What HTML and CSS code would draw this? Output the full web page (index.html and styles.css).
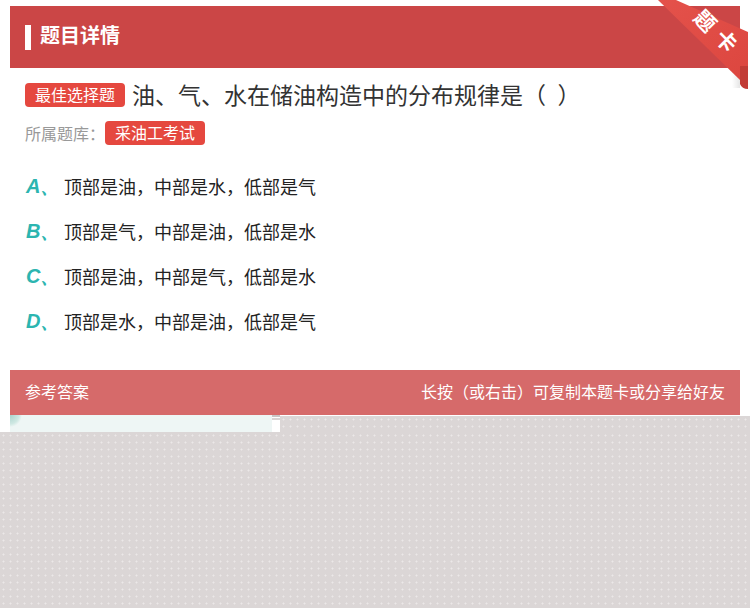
FILE: index.html
```html
<!DOCTYPE html>
<html lang="zh">
<head>
<meta charset="utf-8">
<title>题目详情</title>
<link rel="stylesheet" href="styles.css">
</head>
<body>
<div class="page">
  <div class="header">
    <span class="header-bar"></span>
    <span class="header-title">题目详情</span>
  </div>

  <div class="question">
    <div class="q-row">
      <span class="badge">最佳选择题</span>
      <span class="q-text">油、气、水在储油构造中的分布规律是（&ensp;）</span>
    </div>
    <div class="meta-row">
      <span class="meta-label">所属题库：</span>
      <span class="badge">采油工考试</span>
    </div>
  </div>

  <ul class="options">
    <li class="option"><span class="opt-key">A、</span><span class="opt-text">顶部是油，中部是水，低部是气</span></li>
    <li class="option"><span class="opt-key">B、</span><span class="opt-text">顶部是气，中部是油，低部是水</span></li>
    <li class="option"><span class="opt-key">C、</span><span class="opt-text">顶部是油，中部是气，低部是水</span></li>
    <li class="option"><span class="opt-key">D、</span><span class="opt-text">顶部是水，中部是油，低部是气</span></li>
  </ul>

  <div class="answer-bar">
    <span class="answer-title">参考答案</span>
    <span class="answer-hint">长按（或右击）可复制本题卡或分享给好友</span>
  </div>

  <div class="strip">
    <div class="strip-left"><div class="strip-light"></div></div>
    <div class="strip-gap"></div>
    <div class="strip-gray"></div>
  </div>
  <div class="bottom"></div>

  <svg class="ribbon" width="92" height="96" viewBox="0 0 92 96" xmlns="http://www.w3.org/2000/svg">
    <defs>
      <linearGradient id="rb" x1="0" y1="0" x2="1" y2="1">
        <stop offset="0" stop-color="#e4524b"/>
        <stop offset="1" stop-color="#dc463f"/>
      </linearGradient>
      <linearGradient id="sh" x1="1" y1="0" x2="0" y2="0">
        <stop offset="0" stop-color="#000" stop-opacity="0.10"/>
        <stop offset="1" stop-color="#000" stop-opacity="0"/>
      </linearGradient>
    </defs>
    <rect x="74" y="68" width="8" height="20" fill="url(#sh)"/>
    <polygon points="0,0 18,0 90,32 90,80 82,80" fill="url(#rb)"/>
    <path d="M82,66 L90,66 L90,89 Q84,89 82,84 Z" fill="#c23c36"/>
    <text class="ribbon-text" x="48" y="20" transform="rotate(45 48 20)">题</text>
    <text class="ribbon-text" x="69" y="40" transform="rotate(45 69 40)">卡</text>
  </svg>
</div>
</body>
</html>
```

FILE: styles.css
```css
* {
  box-sizing: border-box;
}

html, body {
  margin: 0;
  padding: 0;
  background: #ffffff;
}

body {
  font-family: "Noto Sans CJK SC", "Noto Sans", sans-serif;
}

.page {
  position: relative;
  width: 750px;
  min-height: 608px;
  padding-top: 6px;
  display: flex;
  flex-direction: column;
  overflow: hidden;
}

.header {
  margin: 0 10px;
  height: 62px;
  background: #cb4646;
  display: flex;
  align-items: center;
  padding-left: 15px;
  gap: 9px;
}

.header-bar {
  width: 6px;
  height: 25px;
  background: #ffffff;
  margin-top: 1px;
}

.header-title {
  color: #ffffff;
  font-size: 20px;
  font-weight: bold;
  line-height: 24px;
  margin-bottom: 5px;
}

.question {
  padding: 15px 25px 0;
  display: flex;
  flex-direction: column;
  gap: 14px;
}

.q-row,
.meta-row {
  display: flex;
  align-items: center;
  height: 24px;
}

.badge {
  display: inline-block;
  height: 24px;
  line-height: 22px;
  padding: 0 10px;
  background: #e5483f;
  color: #ffffff;
  font-size: 16px;
  border-radius: 4px;
}

.q-text {
  margin-left: 7px;
  font-size: 23px;
  color: #333333;
  line-height: 24px;
  margin-bottom: 3px;
}

.meta-label {
  font-size: 16px;
  color: #999999;
}

.options {
  list-style: none;
  margin: 19px 0 0;
  padding: 0 0 0 26px;
}

.option {
  height: 45px;
  display: flex;
  align-items: center;
}

.opt-key {
  width: 38px;
  font-family: "Liberation Sans", Arial, sans-serif;
  font-style: italic;
  font-weight: bold;
  font-size: 20px;
  color: #2cb5b0;
}

.opt-text {
  font-size: 18px;
  color: #222222;
  margin-bottom: 2px;
}

.answer-bar {
  margin: 26px 10px 0;
  height: 45px;
  background: #d66a6a;
  display: flex;
  align-items: center;
  justify-content: space-between;
  padding: 0 15px 4px;
  color: #ffffff;
  font-size: 16px;
}

.strip {
  display: flex;
  height: 17px;
}

.strip-left {
  width: 272px;
  padding-left: 10px;
  background: #ffffff;
}

.strip-light {
  height: 100%;
  background:
    radial-gradient(circle at 0 0, #a9d3cc 0, #cfe8e3 9px, transparent 12px),
    #eef6f5;
}

.strip-gap {
  width: 8px;
  background: linear-gradient(#c9c4c4 0 2px, #ffffff 2px 3px, #d9d4d4 3px 5px, #ffffff 5px);
}

.strip-gray,
.bottom {
  background-color: #dbd6d6;
  background-image: radial-gradient(circle, #ebe8e8 0.8px, transparent 1.2px);
  background-size: 7px 7px;
}

.strip-gray {
  flex: 1;
  margin-top: 1px;
}

.bottom {
  flex: 1;
}

.ribbon {
  position: absolute;
  top: 0;
  left: 658px;
}

.ribbon-text {
  fill: #ffffff;
  font-size: 21px;
  font-weight: bold;
  font-family: "Noto Sans CJK SC", sans-serif;
  text-anchor: middle;
  dominant-baseline: central;
}
```
